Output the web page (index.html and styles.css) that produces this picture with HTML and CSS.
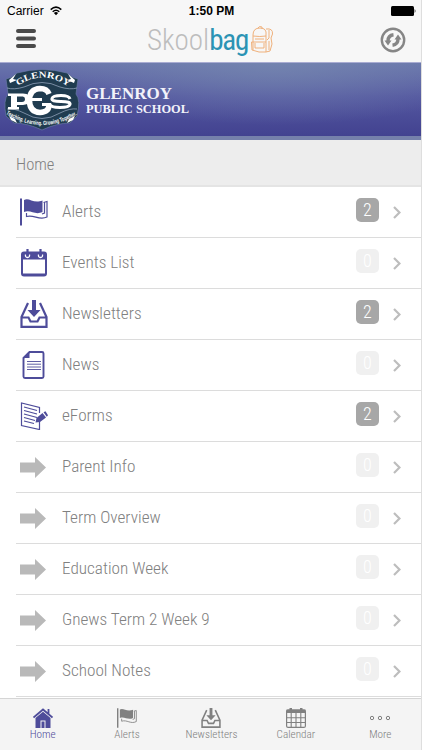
FILE: index.html
```html
<!DOCTYPE html>
<html lang="en">
<head>
    <meta charset="UTF-8">
    <meta name="viewport" content="width=device-width, initial-scale=1.0">
    <title>Skoolbag</title>
    <link rel="stylesheet" href="styles.css">
</head>
<body>

    <!-- Shared icons -->
    <svg class="sprite" width="0" height="0">
        <symbol id="icon-flag" viewBox="0 0 28 28">
            <path d="M0 .5h2v27H0z" fill="currentColor"/>
            <path d="M4 2C9-1 13 6 22.500 2.500V14C15 17.500 11 11.500 4 14z" fill="currentColor"/>
            <path d="M23.500 4.500 27 3.500V19C19 23 14 16 6.500 18.500V15M24.500 4.500V15L22 16" fill="none" stroke="currentColor" stroke-width="1.200"/>
        </symbol>
        <symbol id="icon-inbox" viewBox="0 0 28 28">
            <path d="M8 3 1.500 17V26.800H26.500V17L20 3M1 17.500H8.500L10.500 21.500H17.500L19.500 17.500H27" fill="none" stroke="currentColor" stroke-width="2.200"/>
            <path d="M12 0h4v10h4.500L14 17 7.500 10H12z" fill="currentColor"/>
        </symbol>
        <symbol id="icon-arrow" viewBox="0 0 26 21">
            <path d="M0 5.500H15V0L26 10.500 15 21V15.500H0z" fill="#b9b9b9"/>
        </symbol>
        <symbol id="icon-chevron" viewBox="0 0 8 13">
            <path d="M1 1 6.500 6.500 1 12" fill="none" stroke="#bdbdbd" stroke-width="2.200"/>
        </symbol>
    </svg>

    <div class="app">
        <div class="status-bar">
            <div class="carrier">
                <span>Carrier</span>
                <svg width="12" height="10" viewBox="0 0 12 10">
                    <path d="M.7 3.600Q6-1.300 11.300 3.600M2.700 5.700Q6 2.700 9.300 5.700" fill="none" stroke="#000" stroke-width="1.500"/>
                    <path d="M3.900 7Q6 5.200 8.100 7L6 9.300z"/>
                </svg>
            </div>
            <span class="time">1:50 PM</span>
            <svg class="battery" width="25" height="10" viewBox="0 0 25 10">
                <rect width="23" height="10" rx="1.500"/>
                <path d="M23.700 3Q25.200 5 23.700 7z"/>
            </svg>
        </div>

        <header class="header">
            <svg class="menu-button" width="20" height="19" viewBox="0 0 20 19">
                <path d="M2 2H18M2 9.500H18M2 17H18" stroke="#4a4a4a" stroke-width="4" stroke-linecap="round"/>
            </svg>
            <div class="logo">
                <span class="skool">Skool</span><span class="bag">bag</span>
                <svg class="backpack" width="24" height="28" viewBox="0 0 24 28" fill="none" stroke="#efb17c">
                    <path d="M3 24V9Q3 2 10 2T16 9V26Q9 27 2 24L1.500 16H16M8 2Q9-.5 12 1V3M16 3Q23 2 22.500 8L21 12 22 18 20 25 16 26M19 4V12L17 14M19 15V24M3 10Q10 11 16 10M5 17V22H14V17M5 13H14"/>
                </svg>
            </div>
            <svg class="refresh-button" width="26" height="26" viewBox="0 0 26 26">
                <circle cx="13" cy="13" r="11.200" fill="none" stroke="#868686" stroke-width="2.400"/>
                <path d="M8 14Q8 8.500 13.500 7.800M18 12Q18 17.500 12.500 18.200" fill="none" stroke="#868686" stroke-width="3.400"/>
                <path d="M4.500 13.500h7L8 18.500zM14.500 12.500h7L18 7.500z" fill="#868686"/>
            </svg>
        </header>

        <div class="banner">
            <svg class="crest" width="76" height="60" viewBox="0 0 76 60">
                <path d="M2 9Q8 8 13 3Q38-4 63 3Q68 8 74 9L72 24Q77 30 73 46L66 53Q53 53 38 60Q23 53 10 53L2 46Q-1 30 4 24z" fill="#203c50" stroke="#6778a5" stroke-width=".7"/>
                <path d="M3 18Q10 20 20 17Q38 8 56 17Q66 20 73 18M3 39Q10 38 20 43Q38 54 56 43Q66 38 73 39" fill="none" stroke="#8ea0b8" stroke-width=".8"/>
                <path d="M5 10 12 4 9 9 13 10 6 13zM71 10 64 4 67 9 63 10 70 13zM7 50 13 53 11 49 5 46zM69 50 63 53 65 49 71 46z" fill="#fff"/>
                <path id="crest-top" d="M14 16Q38-1 63 16" fill="none"/>
                <path id="crest-bottom" d="M2 44Q38 66 74 44" fill="none"/>
                <text class="crest-name"><textPath href="#crest-top" textLength="54" lengthAdjust="spacingAndGlyphs">GLENROY</textPath></text>
                <text class="crest-motto"><textPath href="#crest-bottom" textLength="75" lengthAdjust="spacingAndGlyphs">Teaching. Learning. Growing Together.</textPath></text>
                <path d="M45 24Q43 18.500 36 18.500Q25.500 19 25.500 30.500T36 42.500Q45 42 45 35" fill="none" stroke="#fff" stroke-width="5.500"/>
                <path d="M4 23.500H19Q27 24 27 29T19 35H13V37H15V39.500H4V37H7V26H4zM13 26.500V32H18Q21 32 21 29T18 26.500z" fill="#fff" fill-rule="evenodd"/>
                <path d="M27 29.500H38M66 29Q65 25.500 57 25.500T48 28.500T57 31.500T66 34.500T56 37.500T46 34.500H38" fill="none" stroke="#fff" stroke-width="3"/>
            </svg>
            <div class="school-name">
                <span class="school-title">GLENROY</span>
                <span class="school-type">PUBLIC SCHOOL</span>
            </div>
        </div>

        <div class="page-title">Home</div>

        <ul class="menu">
            <li class="menu-item">
                <svg class="icon" width="28" height="28"><use href="#icon-flag"/></svg>
                <span class="label">Alerts</span>
                <span class="badge">2</span>
                <svg class="chevron" width="8" height="13"><use href="#icon-chevron"/></svg>
            </li>
            <li class="menu-item">
                <svg class="icon" width="28" height="28" viewBox="0 0 28 28">
                    <path d="M4 2.500H24Q27 2.500 27 5.500V24.500Q27 27.500 24 27.500H4Q1 27.500 1 24.500V5.500Q1 2.500 4 2.500zM3 10.500V24.500H25V10.500z" fill="currentColor" fill-rule="evenodd"/>
                    <path d="M5.500 5.500Q5 8.500 7.500 8.500T9.500 5.500M18.500 5.500Q18 8.500 20.500 8.500T22.500 5.500" fill="none" stroke="#fff" stroke-width="1.300"/>
                    <path d="M7.500 0V6M20.500 0V6" stroke="currentColor" stroke-width="2.200"/>
                </svg>
                <span class="label">Events List</span>
                <span class="badge empty">0</span>
                <svg class="chevron" width="8" height="13"><use href="#icon-chevron"/></svg>
            </li>
            <li class="menu-item">
                <svg class="icon" width="28" height="28"><use href="#icon-inbox"/></svg>
                <span class="label">Newsletters</span>
                <span class="badge">2</span>
                <svg class="chevron" width="8" height="13"><use href="#icon-chevron"/></svg>
            </li>
            <li class="menu-item">
                <svg class="icon" width="28" height="28" viewBox="0 0 28 28">
                    <path d="M9.500 1H22Q23.500 1 23.500 2.500V25.500Q23.500 27 22 27H5Q3.500 27 3.500 25.500V7z" fill="none" stroke="currentColor" stroke-width="1.900"/>
                    <path d="M9.500 1V7H3.500z" fill="currentColor"/>
                    <path d="M7 10.500H21M7 13.200H21M7 16H21M7 18.500H21" stroke="currentColor" stroke-width=".9"/>
                </svg>
                <span class="label">News</span>
                <span class="badge empty">0</span>
                <svg class="chevron" width="8" height="13"><use href="#icon-chevron"/></svg>
            </li>
            <li class="menu-item">
                <svg class="icon" width="28" height="28" viewBox="0 0 28 28">
                    <path d="M19.500 11V5.500L1.500 1V23.500L19.500 27.500V20M4 5 17 8.500M4 8.500 17 12M4 12 17 15.500M4 15.500 15 18.500M4 19 14 21.500" fill="none" stroke="currentColor" stroke-width="1.200"/>
                    <path d="M15.500 20.500 16.500 16 22.500 11 26 15.500 20 20zM23.500 10.300 25.500 9.300 28 13.200 26.800 14.700z" fill="currentColor"/>
                </svg>
                <span class="label">eForms</span>
                <span class="badge">2</span>
                <svg class="chevron" width="8" height="13"><use href="#icon-chevron"/></svg>
            </li>
            <li class="menu-item">
                <svg class="icon arrow" width="26" height="21"><use href="#icon-arrow"/></svg>
                <span class="label">Parent Info</span>
                <span class="badge empty">0</span>
                <svg class="chevron" width="8" height="13"><use href="#icon-chevron"/></svg>
            </li>
            <li class="menu-item">
                <svg class="icon arrow" width="26" height="21"><use href="#icon-arrow"/></svg>
                <span class="label">Term Overview</span>
                <span class="badge empty">0</span>
                <svg class="chevron" width="8" height="13"><use href="#icon-chevron"/></svg>
            </li>
            <li class="menu-item">
                <svg class="icon arrow" width="26" height="21"><use href="#icon-arrow"/></svg>
                <span class="label">Education Week</span>
                <span class="badge empty">0</span>
                <svg class="chevron" width="8" height="13"><use href="#icon-chevron"/></svg>
            </li>
            <li class="menu-item">
                <svg class="icon arrow" width="26" height="21"><use href="#icon-arrow"/></svg>
                <span class="label">Gnews Term 2 Week 9</span>
                <span class="badge empty">0</span>
                <svg class="chevron" width="8" height="13"><use href="#icon-chevron"/></svg>
            </li>
            <li class="menu-item">
                <svg class="icon arrow" width="26" height="21"><use href="#icon-arrow"/></svg>
                <span class="label">School Notes</span>
                <span class="badge empty">0</span>
                <svg class="chevron" width="8" height="13"><use href="#icon-chevron"/></svg>
            </li>
        </ul>

        <nav class="tab-bar">
            <div class="tab active">
                <svg width="20" height="20" viewBox="0 0 20 20">
                    <path d="M2.500 10 10 3.800 17.500 10V20H12.500V12.500H7.500V20H2.500zM8.500 13.500H11.500V20H8.500z" fill="currentColor"/>
                    <path d="M.5 9.500 10 1.500 19.500 9.500M15.500 1V6" fill="none" stroke="currentColor" stroke-width="1.800"/>
                </svg>
                <span class="tab-label">Home</span>
            </div>
            <div class="tab">
                <svg width="20" height="20"><use href="#icon-flag"/></svg>
                <span class="tab-label">Alerts</span>
            </div>
            <div class="tab">
                <svg width="20" height="20"><use href="#icon-inbox"/></svg>
                <span class="tab-label">Newsletters</span>
            </div>
            <div class="tab">
                <svg width="20" height="20" viewBox="0 0 20 20">
                    <rect x=".6" y="2" width="18.800" height="17.400" rx="1.500" fill="none" stroke="currentColor" stroke-width="1.200"/>
                    <path d="M.5 1.500H19.500V5H.5zM3.500 0H6V2H3.500zM14 0H16.500V2H14z" fill="currentColor"/>
                    <path d="M5.200 5V19.500M10 5V19.500M14.800 5V19.500M.5 9.800H19.500M.5 14.500H19.500" stroke="currentColor" stroke-width="1.100"/>
                </svg>
                <span class="tab-label">Calendar</span>
            </div>
            <div class="tab">
                <svg width="20" height="20" viewBox="0 0 20 20" fill="none" stroke="currentColor">
                    <circle cx="2" cy="10" r="1.700"/>
                    <circle cx="10" cy="10" r="1.700"/>
                    <circle cx="18" cy="10" r="1.700"/>
                </svg>
                <span class="tab-label">More</span>
            </div>
        </nav>
    </div>

</body>
</html>
```

FILE: styles.css
```css
* {
    box-sizing: border-box;
}

body {
    margin: 0;
    background-color: #f7f7f7;
    font-family: "Roboto Condensed", Roboto, sans-serif;
    font-stretch: 75%;
    font-weight: 300;
    color: #808080;
}

.sprite {
    position: absolute;
}

.app {
    display: flex;
    flex-direction: column;
    width: 422px;
    height: 750px;
    overflow: hidden;
    border-right: 1px solid #dedede;
}

/* Status bar */
.status-bar {
    display: grid;
    grid-template-columns: 1fr auto 1fr;
    align-items: center;
    height: 22px;
    padding: 0 5px 0 7px;
    font: 12px "Liberation Sans", Arial, sans-serif;
    color: #000;
}

.carrier {
    display: flex;
    align-items: center;
    gap: 6px;
}

.time {
    font-weight: bold;
}

.battery {
    justify-self: end;
}

/* Header */
.header {
    display: flex;
    align-items: center;
    justify-content: space-between;
    height: 40px;
    padding: 0 15px 4px 16px;
}

.menu-button {
    margin-bottom: 3px;
}

.logo {
    display: flex;
    align-items: center;
    margin-left: 5px;
    font-size: 29px;
    line-height: 34px;
}

.skool {
    color: #bdbdbd;
}

.bag {
    color: #2b93b4;
    font-weight: 400;
    letter-spacing: -1.2px;
}

.backpack {
    margin-left: 2px;
}

/* School banner */
.banner {
    display: flex;
    align-items: center;
    height: 78px;
    padding-left: 4px;
    gap: 6px;
    background: radial-gradient(ellipse at 65% 0, rgba(118, 136, 176, 0.75), transparent 60%), linear-gradient(#6a76ac, #5457a0 45%, #424290);
    border-top: 1px solid #a9acd2;
    border-bottom: 4px solid #7580ab;
}

.crest {
    overflow: visible;
}

.crest-name {
    font: bold 9px "Liberation Serif", serif;
    fill: #fff;
}

.crest-motto {
    font: bold 6px "Liberation Sans", sans-serif;
    fill: #fff;
}

.school-name {
    display: flex;
    flex-direction: column;
    padding-top: 3px;
    font-family: "Liberation Serif", "Times New Roman", serif;
    font-weight: bold;
    color: #f2f2fa;
}

.school-title {
    font-size: 17px;
    line-height: 17px;
}

.school-type {
    font-size: 12.4px;
    line-height: 15px;
}

/* Page title */
.page-title {
    height: 47px;
    padding: 14px 0 0 16px;
    font-size: 16.5px;
    line-height: 22px;
    background-color: #ededed;
    border-bottom: 2px solid #e4e4e4;
}

/* Menu list */
.menu {
    list-style: none;
    height: 511px;
    margin: 0;
    padding: 0 0 0 16px;
    background-color: #fff;
}

.menu-item {
    display: flex;
    align-items: center;
    height: 51px;
    padding: 0 20px 0 4px;
    border-bottom: 1px solid #dcdcdc;
}

.icon {
    flex: none;
    margin-bottom: 1px;
    color: #4e4c9a;
}

.icon.arrow {
    margin: 0 2px 0 0;
}

.label {
    flex: 1;
    margin: 0 0 2px 14px;
    font-size: 17.2px;
    white-space: nowrap;
}

.badge {
    width: 23px;
    height: 24px;
    margin: 0 14px 4px 0;
    border-radius: 5px;
    background-color: #a7a7a7;
    color: #fff;
    font-size: 18px;
    line-height: 24px;
    text-align: center;
}

.badge.empty {
    background-color: #f0f0f0;
}

/* Bottom tabs */
.tab-bar {
    display: grid;
    grid-template-columns: repeat(5, 1fr);
    flex: 1;
    margin-right: -1px;
    background-color: #f4f4f4;
    border-top: 1px solid #d5d5d5;
}

.tab {
    display: flex;
    flex-direction: column;
    align-items: center;
    padding: 9px 0 0 1px;
    color: #808080;
}

.tab.active {
    color: #4e4c9a;
}

.tab-label {
    font-size: 11.2px;
    line-height: 14px;
}
```
